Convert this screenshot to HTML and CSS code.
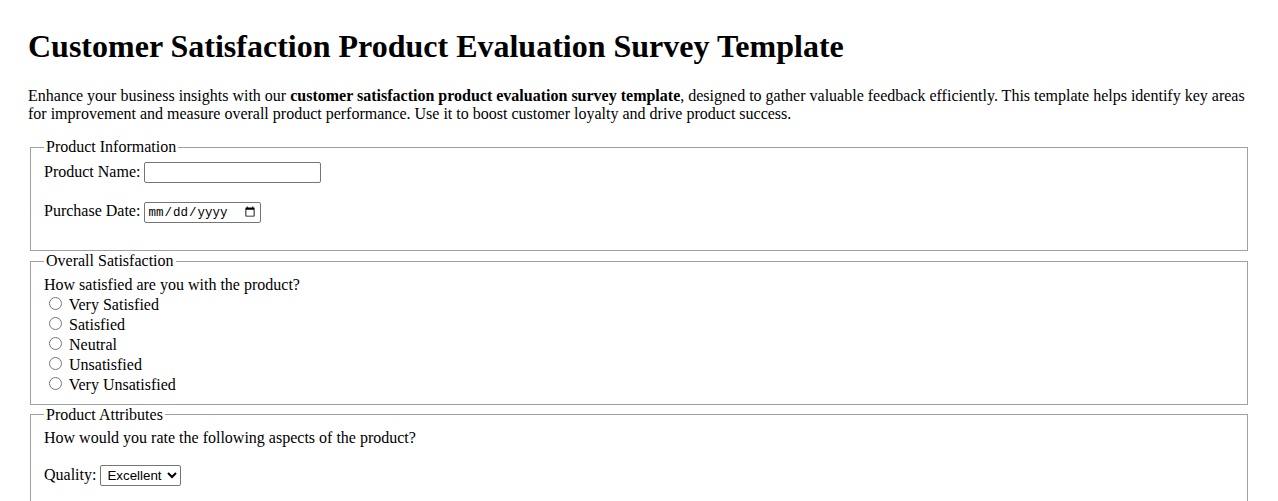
FILE: index.html
```html
<!DOCTYPE html>
<html lang="en">
<head>
<meta charset="utf-8">
<title>Customer Satisfaction Product Evaluation Survey Template</title>
<link rel="stylesheet" href="styles.css">
</head>
<body>
<h1 class="title">Customer Satisfaction Product Evaluation Survey Template</h1>
<p class="intro">Enhance your business insights with our <strong>customer satisfaction product evaluation survey template</strong>, designed to gather valuable feedback efficiently. This template helps identify key areas for improvement and measure overall product performance. Use it to boost customer loyalty and drive product success.</p>
<form class="survey">
  <fieldset class="section">
    <legend>Product Information</legend>
    <div class="field field-first">
      <label for="pname">Product Name:</label>
      <input type="text" id="pname" class="text-input">
    </div>
    <div class="field">
      <label for="pdate">Purchase Date:</label>
      <input type="date" id="pdate" class="date-input">
    </div>
  </fieldset>
  <fieldset class="section">
    <legend>Overall Satisfaction</legend>
    <label>How satisfied are you with the product?</label><br>
    <input type="radio" name="sat" id="s1" class="radio"> <label for="s1">Very Satisfied</label><br>
    <input type="radio" name="sat" id="s2" class="radio"> <label for="s2">Satisfied</label><br>
    <input type="radio" name="sat" id="s3" class="radio"> <label for="s3">Neutral</label><br>
    <input type="radio" name="sat" id="s4" class="radio"> <label for="s4">Unsatisfied</label><br>
    <input type="radio" name="sat" id="s5" class="radio"> <label for="s5">Very Unsatisfied</label>
  </fieldset>
  <fieldset class="section">
    <legend>Product Attributes</legend>
    <div class="field question">How would you rate the following aspects of the product?</div>
    <div class="field">
      <label for="quality">Quality:</label>
      <select id="quality" class="select">
        <option>Excellent</option>
        <option>Good</option>
        <option>Average</option>
        <option>Poor</option>
      </select>
    </div>
  </fieldset>
</form>
</body>
</html>
```

FILE: styles.css
```css
body {
  margin: 8px;
  padding: 20px;
  font-family: "Liberation Serif", "Times New Roman", serif;
  font-size: 16px;
  color: #000;
  background: #fff;
}

.title {
  margin: 0 0 22px 0;
  font-size: 32px;
  font-weight: bold;
}

.intro {
  margin: 0 0 15px 0;
}

.section {
  margin: 0 2px 1px 2px;
  border: 1px solid #a0a0a0;
  padding: 5.6px 12px 10px 13px;
}

.section legend {
  padding: 0 2px;
}

.field {
  margin-bottom: 17px;
}

.field-first {
  margin-bottom: 19px;
}

.question {
  margin-bottom: 18px;
}

.text-input,
.date-input,
.select {
  box-sizing: border-box;
  height: 21px;
  border: 1px solid #767676;
  border-radius: 2px;
  font-family: "Liberation Sans", Arial, sans-serif;
  font-size: 13.333px;
  vertical-align: baseline;
}

.text-input {
  width: 177px;
  padding: 1px 2px;
}

.date-input {
  width: 117px;
  padding: 1px 2px;
  font-family: "Liberation Mono", "Courier New", monospace;
  font-size: 12.5px;
}

.select {
  width: 81px;
  padding: 0 0 0 2px;
  background: #fff;
  color: #000;
}
```
